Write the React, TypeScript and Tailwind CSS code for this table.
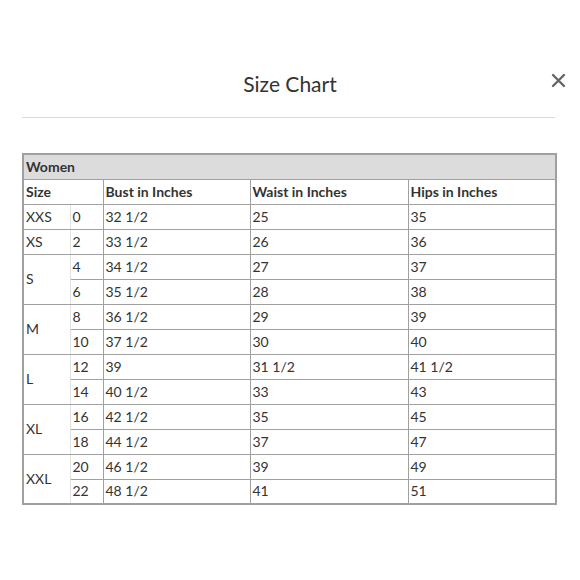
import React from "react";

type Row = { size?: string; span?: number; num: string; bust: string; waist: string; hips: string };

const rows: Row[] = [
  { size: "XXS", span: 1, num: "0", bust: "32 1/2", waist: "25", hips: "35" },
  { size: "XS", span: 1, num: "2", bust: "33 1/2", waist: "26", hips: "36" },
  { size: "S", span: 2, num: "4", bust: "34 1/2", waist: "27", hips: "37" },
  { num: "6", bust: "35 1/2", waist: "28", hips: "38" },
  { size: "M", span: 2, num: "8", bust: "36 1/2", waist: "29", hips: "39" },
  { num: "10", bust: "37 1/2", waist: "30", hips: "40" },
  { size: "L", span: 2, num: "12", bust: "39", waist: "31 1/2", hips: "41 1/2" },
  { num: "14", bust: "40 1/2", waist: "33", hips: "43" },
  { size: "XL", span: 2, num: "16", bust: "42 1/2", waist: "35", hips: "45" },
  { num: "18", bust: "44 1/2", waist: "37", hips: "47" },
  { size: "XXL", span: 2, num: "20", bust: "46 1/2", waist: "39", hips: "49" },
  { num: "22", bust: "48 1/2", waist: "41", hips: "51" },
];

const cell = "border border-[#a0a0a0] px-[2px] h-[25px] align-middle";

export default function App() {
  return (
    <div className="w-[580px] h-[580px] bg-white font-['Lato',sans-serif] text-[#333]">
      <div className="relative h-[118px] ml-[22px] mr-[25px] border-b border-[#d9d9d9]">
        <h1 className="pt-[73px] pl-[3px] text-center text-[21px] leading-none text-[#333]">Size Chart</h1>
        <button type="button" className="absolute right-[-11px] top-[73px] text-[#666]">
          <svg width="15" height="15" viewBox="0 0 15 15">
            <path d="M2 2L13 13M13 2L2 13" stroke="currentColor" strokeWidth="2.4" strokeLinecap="round" />
          </svg>
        </button>
      </div>

      <div className="px-[22px] pt-[35px]">
        <table className="w-[533px] border-collapse border-2 border-[#a0a0a0] text-[14px] leading-none table-fixed">
          <colgroup>
            <col className="w-[47px]" />
            <col className="w-[33px]" />
            <col className="w-[147px]" />
            <col className="w-[158px]" />
            <col className="w-[148px]" />
          </colgroup>
          <thead>
            <tr className="bg-[#dcdcdc]">
              <th colSpan={5} className={`${cell} text-left font-bold`}>Women</th>
            </tr>
            <tr>
              <th colSpan={2} className={`${cell} text-left font-bold`}>Size</th>
              <th className={`${cell} text-left font-bold`}>Bust in Inches</th>
              <th className={`${cell} text-left font-bold`}>Waist in Inches</th>
              <th className={`${cell} text-left font-bold`}>Hips in Inches</th>
            </tr>
          </thead>
          <tbody>
            {rows.map((r) => (
              <tr key={r.num}>
                {r.size && (
                  <td rowSpan={r.span} className={`${cell} border-r-[#e2e2e2]`}>
                    {r.size}
                  </td>
                )}
                <td className={`${cell} border-l-[#e2e2e2]`}>{r.num}</td>
                <td className={cell}>{r.bust}</td>
                <td className={cell}>{r.waist}</td>
                <td className={cell}>{r.hips}</td>
              </tr>
            ))}
          </tbody>
        </table>
      </div>
    </div>
  );
}
